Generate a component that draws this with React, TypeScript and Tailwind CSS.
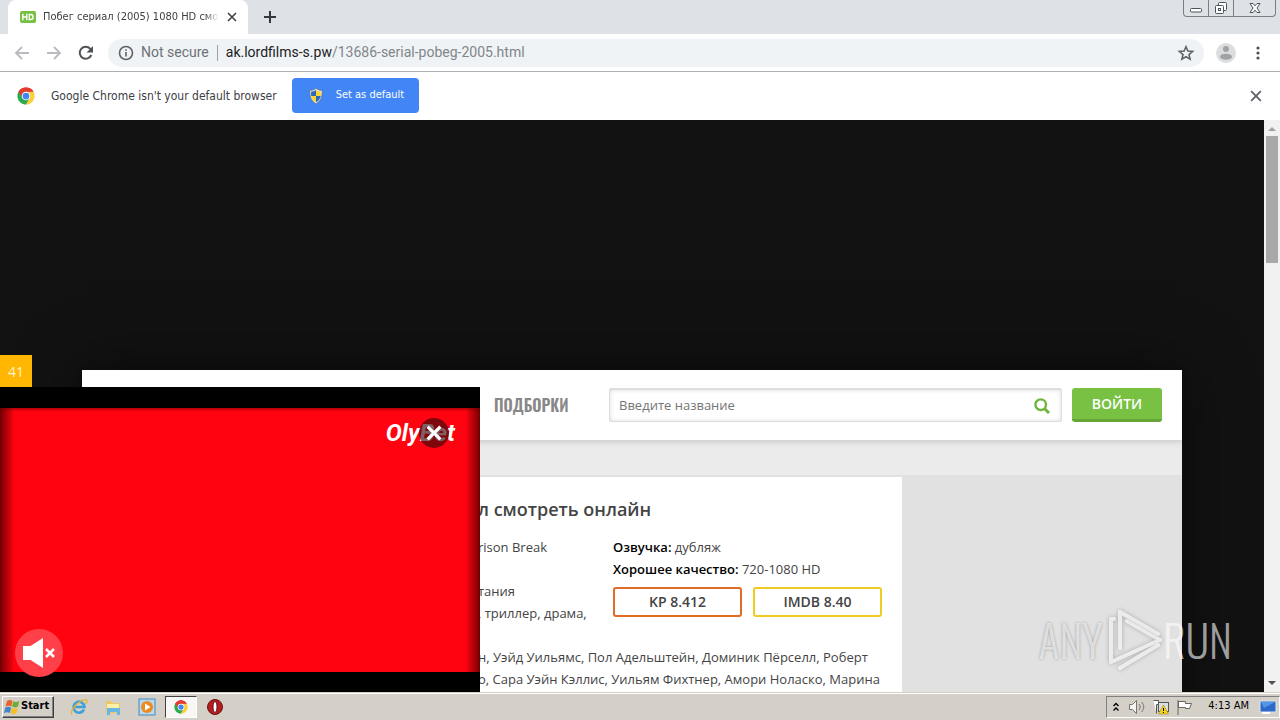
import React from "react";

const ui = "font-['Tahoma','DejaVu_Sans_Condensed','DejaVu_Sans',sans-serif]";

function ChromeLogo({ className }: { className: string }) {
  return (
    <svg viewBox="0 0 48 48" className={className} aria-hidden="true">
      <circle cx="24" cy="24" r="23" fill="#fff" />
      <path d="M24 24 4.1 12.5A23 23 0 0 1 43.9 12.5H24Z" fill="#e33b2e" />
      <path d="M24 24 4.1 12.5A23 23 0 0 0 24 47l10-17.2Z" fill="#2da94f" />
      <path d="M34 29.8 24 47A23 23 0 0 0 43.9 12.5H24Z" fill="#fdcf35" />
      <path d="M4.1 12.5 14 29.8 24 24V12.5Z" fill="#2da94f" />
      <path d="M4.1 12.5A23 23 0 0 1 43.9 12.5H24A11.5 11.5 0 0 0 13.5 19.5L12 26Z" fill="#e33b2e" />
      <circle cx="24" cy="24" r="11.5" fill="#fff" />
      <circle cx="24" cy="24" r="9" fill="#4285f4" />
    </svg>
  );
}

function Cross({ className, width = 2 }: { className: string; width?: number }) {
  return (
    <svg viewBox="0 0 10 10" className={className} fill="none" stroke="currentColor" strokeWidth={width} aria-hidden="true">
      <path d="M1 1l8 8M9 1l-8 8" />
    </svg>
  );
}

function TabStrip() {
  return (
    <div className="flex h-[34px] shrink-0 items-stretch justify-between bg-[#dee1e6]">
      <div className="flex min-w-0 pl-2">
        <div className="flex w-60 items-center rounded-t-lg bg-white pr-[11px] pl-3 text-[#3c4043]">
          <svg viewBox="0 0 16 12" className="h-3 w-4 shrink-0" aria-hidden="true">
            <rect width="16" height="12" rx="2" fill="#76c043" />
            <path d="M2.8 2.8v6.4M6.8 2.8v6.4M2.8 6h4M9.3 3.5v5h1.5c3 0 3-5 0-5z" fill="none" stroke="#fff" strokeWidth="1.4" />
          </svg>
          <span className="ml-[7px] min-w-0 flex-1 text-[11px] whitespace-nowrap [mask-image:linear-gradient(to_right,black_92%,transparent)]">
            Побег сериал (2005) 1080 HD смот
          </span>
          <button aria-label="Close tab" className="ml-2 shrink-0">
            <Cross className="size-[10px]" width={1.6} />
          </button>
        </div>
        <button aria-label="New tab" className="ml-3 flex w-5 items-center justify-center text-[#35383c]">
          <svg viewBox="0 0 12 12" className="size-3" stroke="currentColor" strokeWidth="2" aria-hidden="true">
            <path d="M6 0v12M0 6h12" />
          </svg>
        </button>
      </div>
      <div className="mr-1 flex h-[17px] overflow-hidden rounded-b-[4px] border border-t-0 border-[#7b8088] text-[#4c5259]">
        <button aria-label="Minimize" className="flex w-[25px] items-center justify-center border-r border-[#7b8088]">
          <svg viewBox="0 0 12 6" className="mt-1 h-1.5 w-3" aria-hidden="true">
            <rect x=".5" y="1.5" width="11" height="3.5" rx="1" fill="#fff" stroke="currentColor" />
          </svg>
        </button>
        <button aria-label="Restore" className="flex w-[25px] items-center justify-center border-r border-[#7b8088]">
          <svg viewBox="0 0 14 14" className="size-[14px]" fill="#fff" stroke="currentColor" aria-hidden="true">
            <rect x="4.5" y="1.5" width="8" height="8" rx="1" />
            <rect x="1.5" y="4.5" width="8" height="8" rx="1" />
            <rect x="4.5" y="7.5" width="2" height="2" />
          </svg>
        </button>
        <button aria-label="Close" className="flex w-[41px] items-center justify-center">
          <svg viewBox="0 0 12 12" className="size-3" fill="#fff" stroke="currentColor" aria-hidden="true">
            <path d="M1 1.5h3l2 2.3 2-2.3h3L8 6l3 4.500H8L6 8.200 4 10.500H1L4 6z" />
          </svg>
        </button>
      </div>
    </div>
  );
}

function Toolbar() {
  return (
    <div className="flex h-[38px] shrink-0 items-center border-b border-[#adb0b3] bg-white pr-[14px] pl-[14px] text-[#5f6368]">
      <button aria-label="Back" className="text-[#b9bbbe]">
        <svg viewBox="0 0 16 16" className="size-4" fill="none" stroke="currentColor" strokeWidth="1.8"><path d="M15 8H2.500M8 2L2 8l6 6" /></svg>
      </button>
      <button aria-label="Forward" className="ml-4 text-[#b9bbbe]">
        <svg viewBox="0 0 16 16" className="size-4" fill="none" stroke="currentColor" strokeWidth="1.8"><path d="M1 8h12.500M8 2l6 6-6 6" /></svg>
      </button>
      <button aria-label="Reload" className="ml-4 text-[#4f5357]">
        <svg viewBox="0 0 16 16" className="size-4" fill="none" stroke="currentColor" strokeWidth="2"><path d="M13.300 10A6 6 0 1 1 12.300 3.800L13.500 5" /><path d="M15 1v6.500H8.500z" fill="currentColor" stroke="none" /></svg>
      </button>
      <div className="ml-[14px] flex h-7 flex-1 items-center rounded-full bg-[#f0f3f5] pr-2 pl-[10px] font-['Roboto',sans-serif] text-[14px]">
        <svg viewBox="0 0 16 16" className="size-4 shrink-0" fill="none" stroke="currentColor" strokeWidth="1.6" aria-hidden="true">
          <circle cx="8" cy="8" r="6.500" />
          <path d="M8 7v4.500M8 4.200v1.600" />
        </svg>
        <span className="ml-[7px] text-[#6d7175]">Not secure</span>
        <span className="mx-2 h-4 w-px bg-[#9aa0a6]" />
        <span className="flex-1 whitespace-nowrap text-[#80868b]">
          <span className="text-[#202124]">ak.lordfilms-s.pw</span>/13686-serial-pobeg-2005.html
        </span>
        <button aria-label="Bookmark this page">
          <svg viewBox="0 0 20 20" className="size-5" fill="none" stroke="currentColor" strokeWidth="1.600"><path d="M10 3.800l1.900 4.300 4.700.4-3.600 3.100 1.100 4.600L10 13.800l-4.100 2.400L7 11.600 3.400 8.500l4.700-.4z" /></svg>
        </button>
      </div>
      <button aria-label="Profile" className="ml-3">
        <svg viewBox="0 0 20 20" className="size-5"><circle cx="10" cy="10" r="10" fill="#dcddde" /><circle cx="10" cy="6" r="3" fill="#a0a2a5" /><ellipse cx="10" cy="13.700" rx="6" ry="3" fill="#a0a2a5" /></svg>
      </button>
      <button aria-label="Menu" className="ml-[14px]">
        <svg viewBox="0 0 16 16" className="size-4" fill="#4f5357"><circle cx="8" cy="3" r="1.600" /><circle cx="8" cy="8" r="1.600" /><circle cx="8" cy="13" r="1.600" /></svg>
      </button>
    </div>
  );
}

function InfoBar() {
  return (
    <div className="flex h-12 shrink-0 items-center bg-white pr-[18px] pb-px pl-[17px]">
      <ChromeLogo className="size-[18px]" />
      <span className="ml-4 text-[12px] text-[#3c4043]">Google Chrome isn&#39;t your default browser</span>
      <button className="ml-[15px] flex h-[35px] w-[127px] items-center gap-3 rounded-[4px] bg-[#4285f4] pl-4 text-[11px] text-white">
        <svg viewBox="0 0 16 16" className="size-4" aria-hidden="true">
          <path d="M8 .5c2 1.500 4 2 6 2C14.500 9 12 13.500 8 15.500 4 13.500 1.500 9 2 2.500c2 0 4-.5 6-2z" fill="#e9edf0" stroke="#77736a" strokeWidth=".6" />
          <path d="M8 2v6H3.200C3 6.500 3 5 3.100 3.700 5 3.500 6.500 3 8 2z" fill="#2e69b5" />
          <path d="M8 2v6h4.800c.2-1.500.2-3 .1-4.300C11 3.500 9.500 3 8 2z" fill="#fbd637" />
          <path d="M8 14.300V8H3.200c.6 3 2.400 5 4.800 6.300z" fill="#fbd637" />
          <path d="M8 14.300V8h4.800c-.6 3-2.400 5-4.800 6.300z" fill="#2e69b5" />
        </svg>
        Set as default
      </button>
      <button aria-label="Dismiss" className="ml-auto text-[#5f6368]"><Cross className="size-3" width={1.500} /></button>
    </div>
  );
}

function SiteHeader() {
  return (
    <header className="relative flex h-[70px] items-center bg-white pr-5 pl-[412px] shadow-[0_2px_6px_rgba(0,0,0,0.15)]">
      <a href="#" className="w-[115px] font-['Oswald','Roboto_Condensed','Liberation_Sans_Narrow',sans-serif] text-[16px] font-semibold text-[#888]">ПОДБОРКИ</a>
      <form className="flex h-[34px] flex-1 items-center rounded-[2px] border border-t-2 border-[#dedede] pr-[11px] shadow-[inset_0_0_4px_rgba(0,0,0,0.15)]" onSubmit={(e) => e.preventDefault()}>
        <input aria-label="Поиск" placeholder="Введите название" className="min-w-0 flex-1 bg-transparent pl-[9px] text-[13px] text-[#444] outline-none placeholder:text-[#757575]" />
        <button aria-label="Найти" className="text-[#6fb43c]">
          <svg viewBox="0 0 16 16" className="size-4" fill="none" stroke="currentColor" strokeWidth="2.400"><circle cx="6.700" cy="6.700" r="5.300" /><path d="M10.500 10.500L15 15" strokeWidth="3" /></svg>
        </button>
      </form>
      <button className="ml-[10px] h-[34px] w-[90px] rounded-[3px] border-b-[3px] border-[#66a536] bg-[#79c143] text-[14px] font-semibold text-white">ВОЙТИ</button>
    </header>
  );
}

function Article() {
  return (
    <article className="flex-1 bg-white pt-[21px] pr-5 pl-[396px] text-[13px] leading-[22px] text-[#444]">
      <h1 className="mb-4 text-[18px] font-semibold">л смотреть онлайн</h1>
      <div className="flex pb-[22px]">
        <div className="w-[135px] shrink-0 whitespace-nowrap">
          <p className="mb-[22px]">rison Break</p>
          <p>тания</p>
          <p>, триллер, драма,</p>
        </div>
        <div className="flex-1">
          <p><b className="font-semibold text-black">Озвучка:</b> дубляж</p>
          <p><b className="font-semibold text-black">Хорошее качество:</b> 720-1080 HD</p>
          <div className="mt-[7px] flex gap-[11px] text-center text-[14px] leading-[26px] font-semibold">
            <div className="flex-1 rounded-[3px] border-2 border-[#e06c26]">KP 8.412</div>
            <div className="flex-1 rounded-[3px] border-2 border-[#f0cc22]">IMDB 8.40</div>
          </div>
        </div>
      </div>
      <p className="whitespace-nowrap">н, Уэйд Уильямс, Пол Адельштейн, Доминик Пёрселл, Роберт<br />о, Сара Уэйн Кэллис, Уильям Фихтнер, Амори Ноласко, Марина</p>
    </article>
  );
}

function VideoAd() {
  return (
    <aside className="absolute bottom-0 left-0 w-[480px]">
      <div className="flex size-8 items-center justify-center bg-[#ffb703] text-[14px] text-[#fff3c4]">41</div>
      <div className="bg-black pt-[21px] pb-5">
        <div className="relative h-[264px] bg-[#ff0310] bg-[linear-gradient(to_right,rgba(90,0,0,0.85),transparent_3%,transparent_97%,rgba(90,0,0,0.85))] shadow-[inset_0_2px_2px_rgba(90,0,0,0.4)]">
          <span className="absolute top-[9px] right-[25px] font-['Roboto',sans-serif] text-[24px] leading-8 font-bold text-white italic">OlyBet</span>
          <button aria-label="Закрыть" className="absolute top-[10px] right-[31px] flex size-[30px] items-center justify-center rounded-full bg-[#3c080c]/65 text-white">
            <Cross className="size-4" width={2} />
          </button>
          <button aria-label="Включить звук" className="absolute -bottom-[5px] left-[15px] rounded-full">
            <svg viewBox="0 0 48 48" className="size-12"><circle cx="24" cy="24" r="24" fill="#ff4048" /><path d="M8 17h7.500L28 9v30l-12.500-8H8z" fill="#fff" /><path d="M31 20l8 8M39 20l-8 8" stroke="#fff" strokeWidth="2.500" /></svg>
          </button>
        </div>
      </div>
    </aside>
  );
}

function Watermark() {
  const letters = "font-['Oswald','Roboto_Condensed',sans-serif] text-[44px] leading-none font-light";
  return (
    <div className="pointer-events-none absolute right-[32px] bottom-[20px] flex items-center text-white/60">
      <span className={letters + " [text-shadow:0_0_3px_rgba(0,0,0,0.3)]"}>ANY</span>
      <svg viewBox="0 0 60 64" className="h-16 w-[60px] drop-shadow-[0_0_2px_rgba(0,0,0,0.35)]" fill="none" stroke="rgba(255,255,255,.7)" strokeWidth="4" strokeLinecap="round" strokeLinejoin="round" aria-hidden="true">
        <path d="M55 26L17 4v36" />
        <path d="M11 11H8v43l49-22L24 13" />
        <path d="M17 60l38-23" />
      </svg>
      <span className={letters}>RUN</span>
    </div>
  );
}

function ScrollBar() {
  return (
    <div className="flex w-4 shrink-0 flex-col items-center bg-[#f1f1f1]" aria-hidden="true">
      <svg viewBox="0 0 16 16" className="size-4"><path d="M4 11l4-4 4 4z" fill="#a3a3a3" /></svg>
      <div className="h-[127px] w-3 bg-[#a8a8a8]" />
      <svg viewBox="0 0 16 16" className="mt-auto size-4"><path d="M4 5l4 4 4-4z" fill="#505050" /></svg>
    </div>
  );
}

function Taskbar() {
  return (
    <footer className="flex h-7 shrink-0 items-center border-t border-[#d4d0c8] bg-[#d4d0c8] pl-[2px] text-black shadow-[inset_0_1px_0_#fff]">
      <button className="flex h-[22px] w-[52px] items-center gap-px border border-t-white border-r-[#404040] border-b-[#404040] border-l-white pl-px text-[11px] font-bold shadow-[inset_-1px_-1px_#808080]">
        <svg viewBox="0 0 16 16" className="size-4" aria-hidden="true">
          <path d="M3 2c2-1.500 4-1 5.500 0L7.300 7.500C5.500 6.300 4 6.500 1.500 7.500z" fill="#e8632b" />
          <path d="M9.300 2.300c2 1 3.500 1 6-.3L14 7.600c-2 1.200-4 1-6 0z" fill="#71ad36" />
          <path d="M1.300 8.500c2-1 4-1 5.800 0L6 14c-2-1.300-3.500-1-6 0z" fill="#4585c9" />
          <path d="M7.900 8.700c2 1 3.800 1.200 6 .2l-1.500 5.400c-2 1.200-3.800 1-5.700 0z" fill="#f5bf29" />
        </svg>
        Start
      </button>
      <nav className="ml-4 flex items-center" aria-label="Quick launch">
        <button aria-label="Internet Explorer" className="mr-4">
          <svg viewBox="0 0 18 18" className="size-[18px]" fill="none"><path d="M14 11.500A5.500 5.500 0 1 1 14.500 9H5" stroke="#3d9fdc" strokeWidth="2.600" /><path d="M2 16.500C-1 13 10 1 16 2c2 .7.500 3-.500 4" stroke="#eab52b" strokeWidth="1.400" /></svg>
        </button>
        <button aria-label="Explorer" className="mr-4">
          <svg viewBox="0 0 18 18" className="size-[18px]"><path d="M2 3h5l1 2h8v10H2z" fill="#eac962" /><path d="M3 6h12v5H3z" fill="#fbefaa" /><path d="M3 10h13v7h-3v-3H6v3H3z" fill="#67b7e4" /></svg>
        </button>
        <button aria-label="Media Player" className="mr-[9px]">
          <svg viewBox="0 0 18 18" className="size-[18px]"><rect x="1" y="1" width="16" height="16" fill="#b7d9ef" stroke="#4389bd" /><circle cx="9" cy="9" r="6" fill="#ee8a22" /><path d="M7 5.500v7L12.500 9z" fill="#fff" /></svg>
        </button>
        <button aria-label="Google Chrome" className="mr-[9px] flex h-[22px] w-8 items-center justify-center border border-t-[#404040] border-r-white border-b-white border-l-[#404040] bg-[#f8f7f5]">
          <ChromeLogo className="size-[14px]" />
        </button>
        <button aria-label="Opera">
          <svg viewBox="0 0 18 18" className="size-[18px]"><circle cx="9" cy="9" r="7.500" fill="#b51c20" stroke="#6b1113" /><ellipse cx="9" cy="9" rx="2" ry="5.500" fill="#fff" stroke="#64191b" /></svg>
        </button>
      </nav>
      <div className="ml-auto flex h-[22px] items-center border border-t-[#808080] border-r-white border-b-white border-l-[#808080] pr-[2px] pl-[5px]">
        <svg viewBox="0 0 8 10" className="h-[10px] w-2" fill="none" stroke="#000" strokeWidth="1.400" aria-hidden="true"><path d="M1.500 4L4 1.500 6.500 4M1.500 8.500L4 6l2.500 2.500" /></svg>
        <svg viewBox="0 0 18 16" className="ml-2 h-4 w-[18px]" fill="#f4f4f4" stroke="#77736e" aria-hidden="true"><path d="M1.500 5.500h3l4-4v13l-4-4h-3z" /><path d="M11 5c1.500 2 1.500 4 0 6M13.500 3c3 3 3 7 0 10" fill="none" /></svg>
        <svg viewBox="0 0 18 16" className="ml-[6px] h-4 w-[18px]" aria-hidden="true"><rect x="6.500" y="3.500" width="10" height="9" fill="#d9dfe2" stroke="#555" /><path d="M1.500 1.500h5v4h-2v9" fill="#fff" stroke="#555" /><path d="M11.500 6l5 9h-10z" fill="#f7d21e" stroke="#a88711" strokeWidth=".6" /><path d="M11.500 9v3M11.500 13v1" stroke="#000" /></svg>
        <svg viewBox="0 0 18 16" className="ml-[6px] h-4 w-[18px]" fill="#fff" stroke="#68645f" aria-hidden="true"><path d="M2 1v15M2.500 2.500h7v2h6l-2 5h-4v-1h-7z" /></svg>
        <time className="ml-[14px] text-[11px]">4:13 AM</time>
        <svg viewBox="0 0 18 16" className="ml-[10px] h-4 w-[18px]" aria-hidden="true"><rect x="1" y="2" width="16" height="11" rx="1" fill="#2c69c8" stroke="#dfe7ef" /><path d="M2 3h14L5 9z" fill="#5596e4" /><path d="M3 14h8" stroke="#fff" strokeWidth="2" /></svg>
      </div>
    </footer>
  );
}

export default function App() {
  return (
    <div className={"flex h-screen flex-col overflow-hidden " + ui}>
      <TabStrip />
      <Toolbar />
      <InfoBar />
      <main className="flex min-h-0 flex-1">
        <div className="relative flex-1 overflow-hidden bg-[#121212] px-5 pt-[250px] font-['Open_Sans',sans-serif]">
          <div className="mx-auto max-w-[1100px] bg-[#ebebeb] shadow-[0_0_60px_rgba(0,0,0,0.5)]">
            <SiteHeader />
            <div className="mt-[35px] flex bg-[#e1e1e1] pt-[2px]">
              <Article />
              <div className="h-[400px] w-[280px] shrink-0" />
            </div>
          </div>
          <VideoAd />
          <Watermark />
        </div>
        <ScrollBar />
      </main>
      <Taskbar />
    </div>
  );
}
